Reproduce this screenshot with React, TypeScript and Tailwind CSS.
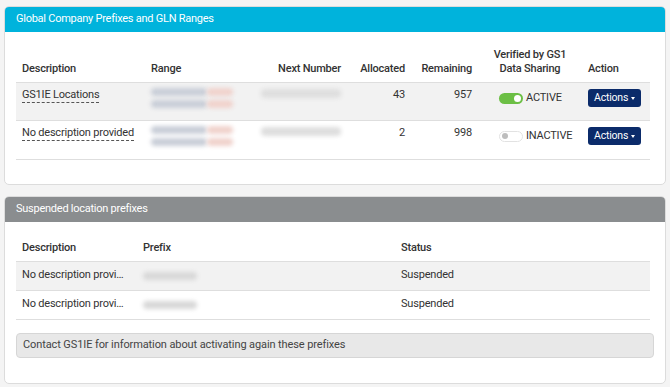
import React from 'react'

function Blur({ w, h = 8, c = 'bg-[#c9ced8]' }: { w: number; h?: number; c?: string }) {
    return <div className={`rounded-sm blur-[2px] ${c}`} style={{ width: w, height: h }} />
}

function RangeBlur() {
    return (
        <div className="flex flex-col gap-[4px] pt-[1px]">
            <div className="flex">
                <Blur w={56} />
                <Blur w={26} c="bg-[#f0d2cc]" />
            </div>
            <div className="flex">
                <Blur w={56} />
                <Blur w={26} c="bg-[#f0d2cc]" />
            </div>
        </div>
    )
}

function Toggle({ on }: { on: boolean }) {
    if (on) {
        return (
            <span className="inline-flex items-center justify-end w-[24px] h-[11px] rounded-full bg-[#6cbf45] px-[2px]">
                <span className="w-[7px] h-[7px] rounded-full bg-white" />
            </span>
        )
    }
    return (
        <span className="inline-flex items-center justify-start w-[24px] h-[11px] rounded-full bg-white border border-[#e2e2e2] px-[2px]">
            <span className="w-[6px] h-[6px] rounded-full bg-[#bdbdbd]" />
        </span>
    )
}

function ActionsButton() {
    return (
        <button className="inline-flex items-center gap-[3px] h-[18px] px-[6px] rounded-[3px] bg-[#0b2b6a] text-white text-[10.5px] tracking-[-0.2px]">
            Actions
            <span className="w-0 h-0 border-l-[2.5px] border-r-[2.5px] border-t-[3px] border-l-transparent border-r-transparent border-t-white" />
        </button>
    )
}

export default function App() {
    const th = "font-medium text-[11px] tracking-[-0.2px] leading-[14px] text-[#333] align-bottom pb-[6px] px-[6px]"
    const td = "px-[6px] align-top pt-[4px]"
    return (
        <main className="w-[670px] h-[387px] bg-[#f4f4f4] px-[4px] pt-[6px] font-['Roboto',sans-serif] text-[#333] overflow-hidden">
            {/* card 1 */}
            <div className="bg-white border border-[#dcdcdc] rounded-[5px] overflow-hidden">
                <div className="h-[25px] bg-[#00b3dc] text-white text-[11px] tracking-[-0.25px] flex items-center px-[11px]">
                    Global Company Prefixes and GLN Ranges
                </div>
                <div className="px-[11px] pt-[16px] pb-[24px]">
                    <table className="w-[634px] border-collapse table-fixed">
                        <colgroup>
                            <col className="w-[129px]" />
                            <col className="w-[95px]" />
                            <col className="w-[107px]" />
                            <col className="w-[64px]" />
                            <col className="w-[67px]" />
                            <col className="w-[104px]" />
                            <col className="w-[68px]" />
                        </colgroup>
                        <thead>
                            <tr className="border-b border-[#dedede]">
                                <th className={`${th} text-left`}>Description</th>
                                <th className={`${th} text-left`}>Range</th>
                                <th className={`${th} text-right`}>Next Number</th>
                                <th className={`${th} text-right`}>Allocated</th>
                                <th className={`${th} text-right`}>Remaining</th>
                                <th className={`${th} text-center`}>Verified by GS1<br />Data Sharing</th>
                                <th className={`${th} text-left`}>Action</th>
                            </tr>
                        </thead>
                        <tbody className="text-[11px] tracking-[-0.2px]">
                            <tr className="bg-[#f2f2f2] border-b border-[#dedede] h-[38px]">
                                <td className={td}>
                                    <span className="border-b border-dashed border-[#555] pb-[1px]">GS1IE Locations</span>
                                </td>
                                <td className={td}><RangeBlur /></td>
                                <td className="px-[6px] align-top pt-[6px]"><div className="flex justify-end"><Blur w={80} h={9} c="bg-[#dedede]" /></div></td>
                                <td className={`${td} text-right`}>43</td>
                                <td className={`${td} text-right`}>957</td>
                                <td className="px-[6px] align-top pt-[7px]">
                                    <div className="flex items-center gap-[3px] pl-[15px]">
                                        <Toggle on />
                                        <span>ACTIVE</span>
                                    </div>
                                </td>
                                <td className="px-[6px] align-top pt-[6px]"><ActionsButton /></td>
                            </tr>
                            <tr className="border-b border-[#dedede] h-[39px]">
                                <td className={td}>
                                    <span className="border-b border-dashed border-[#555] pb-[1px] whitespace-nowrap">No description provided</span>
                                </td>
                                <td className={td}><RangeBlur /></td>
                                <td className="px-[6px] align-top pt-[6px]"><div className="flex justify-end"><Blur w={80} h={9} c="bg-[#dedede]" /></div></td>
                                <td className={`${td} text-right`}>2</td>
                                <td className={`${td} text-right`}>998</td>
                                <td className="px-[6px] align-top pt-[7px]">
                                    <div className="flex items-center gap-[3px] pl-[15px]">
                                        <Toggle on={false} />
                                        <span>INACTIVE</span>
                                    </div>
                                </td>
                                <td className="px-[6px] align-top pt-[6px]"><ActionsButton /></td>
                            </tr>
                        </tbody>
                    </table>
                </div>
            </div>

            {/* card 2 */}
            <div className="mt-[11px] bg-white border border-[#dcdcdc] rounded-[5px] overflow-hidden">
                <div className="h-[25px] bg-[#8a8d8f] text-white text-[11px] tracking-[-0.25px] flex items-center px-[11px]">
                    Suspended location prefixes
                </div>
                <div className="px-[11px] pt-[14px] pb-[25px]">
                    <table className="w-[634px] border-collapse table-fixed">
                        <colgroup>
                            <col className="w-[121px]" />
                            <col className="w-[258px]" />
                            <col />
                        </colgroup>
                        <thead>
                            <tr className="border-b border-[#dedede] h-[25px]">
                                <th className="font-medium text-[11px] tracking-[-0.2px] text-left px-[6px]">Description</th>
                                <th className="font-medium text-[11px] tracking-[-0.2px] text-left px-[6px]">Prefix</th>
                                <th className="font-medium text-[11px] tracking-[-0.2px] text-left px-[6px]">Status</th>
                            </tr>
                        </thead>
                        <tbody className="text-[11px] tracking-[-0.2px]">
                            <tr className="bg-[#f2f2f2] border-b border-[#dedede] h-[29px]">
                                <td className="px-[6px] whitespace-nowrap overflow-hidden">No description provi…</td>
                                <td className="px-[6px]"><Blur w={54} h={8} c="bg-[#d8d8d8]" /></td>
                                <td className="px-[6px]">Suspended</td>
                            </tr>
                            <tr className="border-b border-[#dedede] h-[29px]">
                                <td className="px-[6px] whitespace-nowrap overflow-hidden">No description provi…</td>
                                <td className="px-[6px]"><Blur w={54} h={8} c="bg-[#d8d8d8]" /></td>
                                <td className="px-[6px]">Suspended</td>
                            </tr>
                        </tbody>
                    </table>
                    <div className="mt-[13px] h-[25px] flex items-center px-[6px] bg-[#e8e8e8] border border-[#d6d6d6] rounded-[4px] text-[11px] tracking-[-0.1px] text-[#444]">
                        Contact GS1IE for information about activating again these prefixes
                    </div>
                </div>
            </div>
        </main>
    )
}
